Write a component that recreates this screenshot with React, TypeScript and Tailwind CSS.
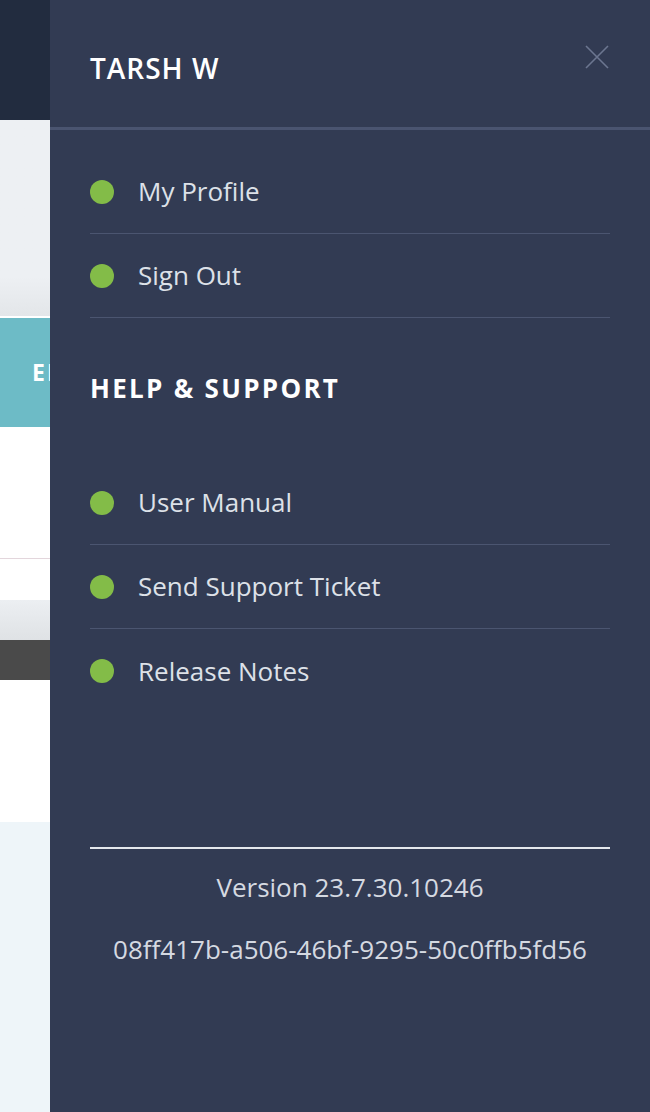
import React from 'react';

const menuItems = ['My Profile', 'Sign Out'];
const helpItems = ['User Manual', 'Send Support Ticket', 'Release Notes'];

function MenuRow({ label, last }: { label: string; last?: boolean }) {
  return (
    <div
      className={`flex h-[84px] items-center gap-6 ${last ? '' : 'border-b border-[#4b5570]'}`}
    >
      <span className="h-6 w-6 shrink-0 rounded-full bg-[#83bc48]" />
      <span className="text-[26px] text-[#dde1e8]">{label}</span>
    </div>
  );
}

export default function App() {
  return (
    <div
      className="flex h-[1112px] w-[650px] overflow-hidden"
      style={{ fontFamily: '"Open Sans", "Noto Sans", sans-serif' }}
    >
      {/* page behind the drawer */}
      <div className="flex w-[50px] shrink-0 flex-col overflow-hidden">
        <div className="h-[120px] bg-[#222c3f]" />
        <div className="h-[196px] bg-gradient-to-b from-[#edf0f3] from-80% to-[#e3e6e9]" />
        <div className="h-[2px] bg-white" />
        <div className="flex h-[109px] items-center bg-[#6dbbc6] pl-8">
          <span className="whitespace-nowrap text-[23px] font-bold tracking-[2px] text-white">EDIT</span>
        </div>
        <div className="h-[131px] bg-white" />
        <div className="h-px bg-[#e3d6dc]" />
        <div className="h-[41px] bg-white" />
        <div className="h-[40px] bg-gradient-to-b from-[#eceff2] to-[#dfe2e5]" />
        <div className="h-[40px] bg-[#4a4a4a]" />
        <div className="h-[142px] bg-white" />
        <div className="flex-1 bg-[#eef5f9]" />
      </div>

      {/* drawer */}
      <div className="flex flex-1 flex-col bg-[#323b53]">
        <div className="relative flex h-[130px] items-start border-b-[3px] border-[#4a5470] pl-10 pt-[54px]">
          <span className="text-[28px] font-semibold leading-none tracking-[1px] text-white">TARSH W</span>
          <button className="absolute right-[40px] top-[44px] text-[#6c7690]">
            <svg width="26" height="26" viewBox="0 0 26 26" fill="none" stroke="currentColor" strokeWidth="1.6">
              <path d="M2 2L24 24M24 2L2 24" />
            </svg>
          </button>
        </div>

        <div className="flex flex-col px-10 pt-[20px]">
          {menuItems.map((item) => (
            <MenuRow key={item} label={item} />
          ))}
        </div>

        <div className="px-10 pt-[57px] pb-[60px]">
          <h2 className="text-[26px] font-bold leading-none tracking-[2.3px] text-white">HELP &amp; SUPPORT</h2>
        </div>

        <div className="flex flex-col px-10">
          {helpItems.map((item, i) => (
            <MenuRow key={item} label={item} last={i === helpItems.length - 1} />
          ))}
        </div>

        <div className="mx-10 mt-[134px] border-t-2 border-[#e4e7ec]" />
        <div className="flex flex-col items-center gap-[23px] pt-[19px] text-[26px] text-[#d5d9e1]">
          <span>Version 23.7.30.10246</span>
          <span>08ff417b-a506-46bf-9295-50c0ffb5fd56</span>
        </div>
      </div>
    </div>
  );
}
